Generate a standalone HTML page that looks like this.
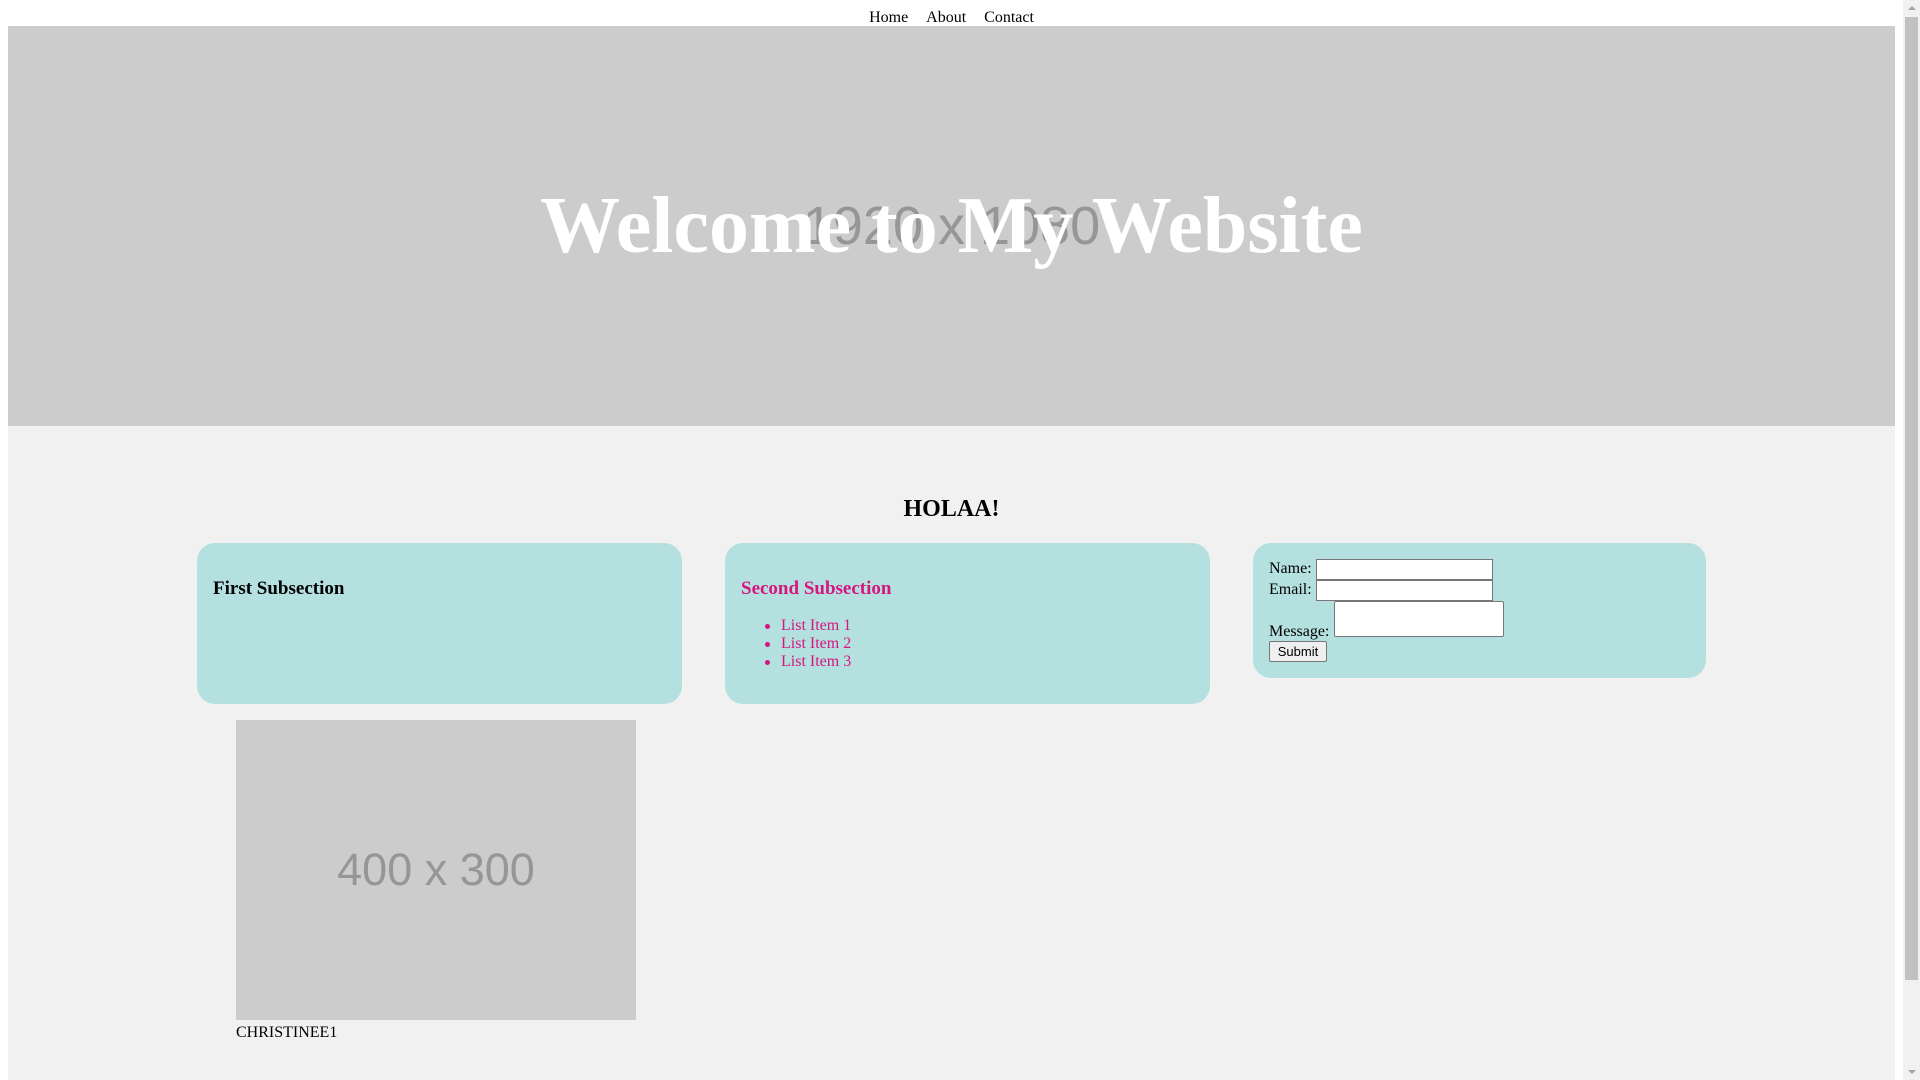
<!DOCTYPE html>
<html><head><meta charset="utf-8"><style>
html,body{margin:0;padding:0;width:1920px;height:1080px;overflow:hidden;background:#fff;font-family:"Liberation Serif","Times New Roman",serif;}
.a{position:absolute;}
#nav{left:0;top:0;width:1903px;height:26px;text-align:center;font-size:16px;line-height:36px;}
#nav span{margin:0 9px;}
#hero{left:8px;top:26px;width:1887px;height:400px;background:#ccc;}
#ph{left:0;top:0;width:100%;height:100%;display:flex;align-items:center;justify-content:center;font-family:"Liberation Sans",sans-serif;font-size:54px;color:#969696;}
#ht{left:0;top:0;width:100%;height:400px;display:flex;align-items:center;justify-content:center;font-size:80px;font-weight:bold;color:#fff;}
#main{left:8px;top:426px;width:1887px;height:654px;background:#f1f1f1;}
h2{position:absolute;margin:0;left:8px;width:1887px;top:494px;text-align:center;font-size:24px;line-height:30px;}
.card{position:absolute;background:#b4e0e0;border-radius:18px;}
h3{position:absolute;margin:0;font-size:19px;line-height:22px;}
.li{position:absolute;font-size:16px;color:#d6157e;line-height:18px;}
.li:before{content:"";position:absolute;left:-16px;top:7px;width:5px;height:5px;border-radius:50%;background:#d6157e;}
.inp{position:absolute;background:#fff;border:1px solid #767676;box-sizing:border-box;}
.lab{position:absolute;font-size:16px;line-height:18px;}
#sb{left:1903px;top:0;width:17px;height:1080px;background:#f1f1f1;}
</style></head><body>
<div class="a" id="nav"><span>Home</span><span>About</span><span>Contact</span></div>
<div class="a" id="hero"><div class="a" id="ph">1920 x 1080</div><div class="a" id="ht">Welcome to My Website</div></div>
<div class="a" id="main"></div>
<h2>HOLAA!</h2>
<div class="card" style="left:197px;top:543px;width:485px;height:161px;"></div>
<h3 style="left:213px;top:578px;">First Subsection</h3>
<div class="card" style="left:725px;top:543px;width:485px;height:161px;"></div>
<h3 style="left:741px;top:578px;color:#d6157e;">Second Subsection</h3>
<div class="li" style="left:781px;top:617px;">List Item 1</div>
<div class="li" style="left:781px;top:635px;">List Item 2</div>
<div class="li" style="left:781px;top:653px;">List Item 3</div>
<div class="card" style="left:1253px;top:543px;width:453px;height:135px;"></div>
<div class="lab" style="left:1269px;top:560px;">Name:</div>
<div class="inp" style="left:1316px;top:559px;width:177px;height:21px;"></div>
<div class="lab" style="left:1269px;top:581px;">Email:</div>
<div class="inp" style="left:1316px;top:580px;width:177px;height:21px;"></div>
<div class="lab" style="left:1269px;top:623px;">Message:</div>
<div class="inp" style="left:1334px;top:601px;width:170px;height:36px;border-radius:2px;"></div>
<div class="a" style="left:1269px;top:641px;width:58px;height:21px;background:#efefef;border:1px solid #767676;box-sizing:border-box;border-radius:2px;font-family:'Liberation Sans',sans-serif;font-size:13px;text-align:center;line-height:19px;">Submit</div>
<div class="a" style="left:236px;top:720px;width:400px;height:300px;background:#ccc;display:flex;align-items:center;justify-content:center;font-family:'Liberation Sans',sans-serif;font-size:45px;color:#969696;">400 x 300</div>
<div class="lab" style="left:236px;top:1024px;">CHRISTINEE1</div>
<div class="a" id="sb"><div class="a" style="left:2px;top:17px;width:13px;height:963px;background:#c1c1c1;"></div>
<div class="a" style="left:5px;top:6px;width:0;height:0;border-left:4px solid transparent;border-right:4px solid transparent;border-bottom:4px solid #a3a3a3;"></div>
<div class="a" style="left:5px;top:1070px;width:0;height:0;border-left:4px solid transparent;border-right:4px solid transparent;border-top:4px solid #a3a3a3;"></div></div>
</body></html>
